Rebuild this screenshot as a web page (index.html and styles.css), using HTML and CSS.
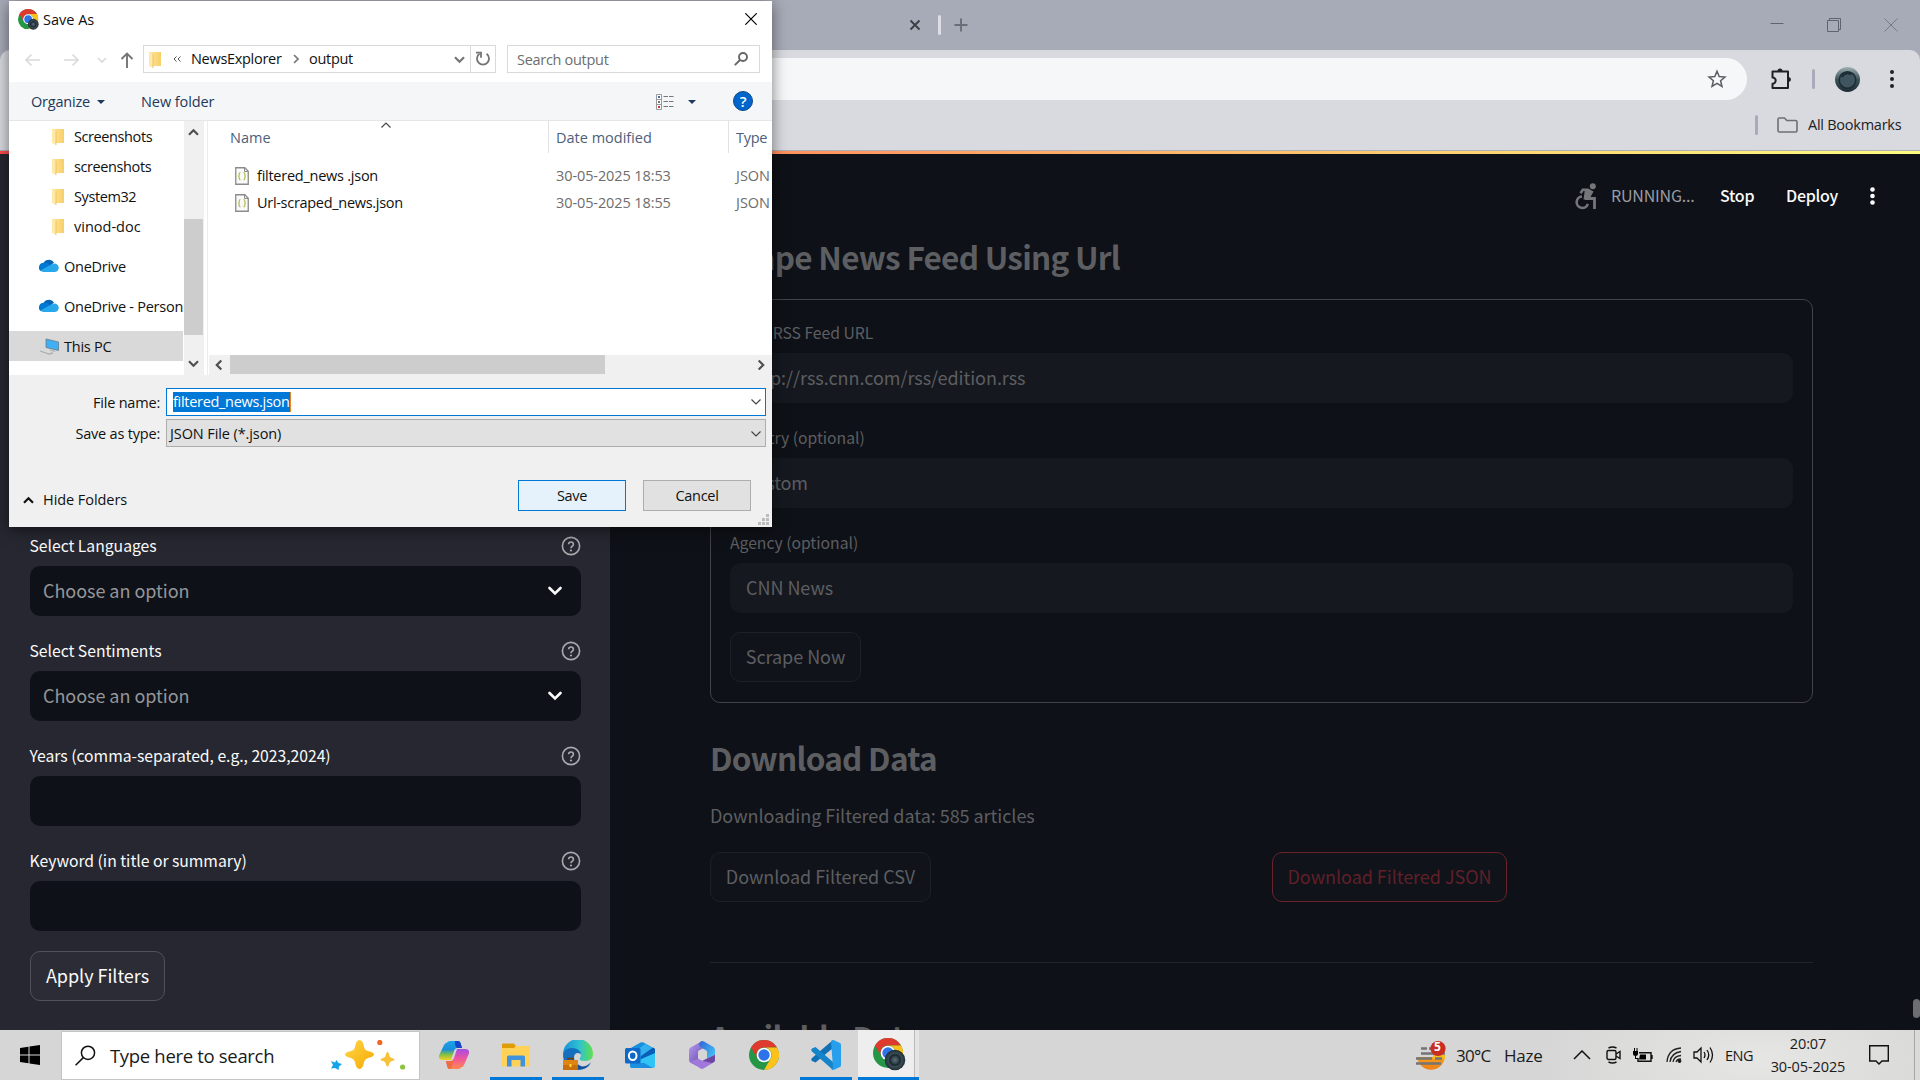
FILE: index.html
```html
<!DOCTYPE html>
<html lang="en">
<head>
<meta charset="utf-8">
<title>News Explorer</title>
<link rel="stylesheet" href="styles.css">
</head>
<body>
<svg class="defs" width="0" height="0" aria-hidden="true">
  <defs>
    <linearGradient id="fold" x1="0" x2="1"><stop offset="0" stop-color="#ffe59b"/><stop offset="1" stop-color="#f7cf68"/></linearGradient>
    <linearGradient id="cpA" x1="0" y1="0" x2="0" y2="1"><stop offset="0" stop-color="#1ba3f0"/><stop offset=".45" stop-color="#1a8fd8"/><stop offset=".7" stop-color="#7cc04a"/><stop offset="1" stop-color="#f5d020"/></linearGradient>
    <linearGradient id="cpB" x1="0" y1="0" x2="0" y2="1"><stop offset="0" stop-color="#a54be8"/><stop offset=".5" stop-color="#f0569b"/><stop offset="1" stop-color="#ff8a4c"/></linearGradient>
    <linearGradient id="edg" x1="0" x2="1"><stop offset="0" stop-color="#1b8fdc"/><stop offset=".55" stop-color="#2fc2cf"/><stop offset="1" stop-color="#62e04a"/></linearGradient>
    <linearGradient id="mA" x1="0" x2="1" y2="1"><stop offset="0" stop-color="#b9a0f5"/><stop offset="1" stop-color="#5b3a9e"/></linearGradient>
    <linearGradient id="mB" x1="0" x2="1" y2="1"><stop offset="0" stop-color="#2f62d8"/><stop offset="1" stop-color="#48d3f7"/></linearGradient>
    <linearGradient id="star" x1="0" x2="1" y2="1"><stop offset="0" stop-color="#ffd84a"/><stop offset="1" stop-color="#f5a800"/></linearGradient>
    <linearGradient id="sun" x1="0" x2="0" y2="1"><stop offset="0" stop-color="#f8c21c"/><stop offset="1" stop-color="#f07f1a"/></linearGradient>
    <radialGradient id="lens" cx=".5" cy=".5" r=".5"><stop offset="0" stop-color="#5d6d78"/><stop offset=".3" stop-color="#3a4a54"/><stop offset=".5" stop-color="#18242b"/><stop offset=".65" stop-color="#3b4c55"/><stop offset="1" stop-color="#1f2d34"/></radialGradient>
    <linearGradient id="sky" x1="0" x2="0" y2="1"><stop offset="0" stop-color="#9fb0b0"/><stop offset=".5" stop-color="#3f525b"/><stop offset="1" stop-color="#1d2c33"/></linearGradient>
    <symbol id="folder" viewBox="0 0 12 17"><path d="M0 1h12v14H4z" fill="url(#fold)"/><path d="M0 1l4 2v14l-4-2z" fill="#ffe9a8"/><path d="M4 3v14" stroke="#e6b84c" stroke-width=".7"/></symbol>
    <symbol id="cloud" viewBox="0 0 20 13"><path d="M4 7a6 6 0 0 1 11-3.500L10 8z" fill="#0364b8"/><path d="M4.500 3.800A4.700 4.700 0 0 0 1.500 12L13 6.500 9 4.200a5 5 0 0 0-4.500-.4z" fill="#0078d4"/><path d="M15 4.600A4.200 4.200 0 0 1 16 13H4.500A4.500 4.500 0 0 1 1.200 11.500L11.500 6z" fill="#28a8ea"/></symbol>
    <symbol id="json" viewBox="0 0 14 18"><path d="M.75.750H9.800L13.250 4.200V17.250H.75z" fill="#fafafa" stroke="#8b8b8b" stroke-width="1.300"/><path d="M9.500 1v3.500h3.500" fill="none" stroke="#8b8b8b"/><path d="M5.500 5.500q-1.300 0-1.300 1.300v1.200q0 1-.9 1.200.9.200.9 1.200v1.200q0 1.300 1.300 1.300M8.500 5.500q1.300 0 1.300 1.300v1.200q0 1 .9 1.200-.9.200-.9 1.200v1.200q0 1.300-1.300 1.300" fill="none" stroke="#b5bd4c" stroke-width="1.200"/></symbol>
    <symbol id="chrome" viewBox="0 0 30 30"><circle cx="15" cy="15" r="15" fill="#249646"/><path d="M2 7.500A15 15 0 0 1 28 7.500H15A7.500 7.500 0 0 0 8.500 18.750z" fill="#df3a30"/><path d="M28 7.500A15 15 0 0 1 15 30l6.500-11.250A7.500 7.500 0 0 0 15 7.500z" fill="#fcc21b"/><circle cx="15" cy="15" r="7.300" fill="#fff"/><circle cx="15" cy="15" r="5.700" fill="#2f73ea"/></symbol>
    <symbol id="help" viewBox="0 0 20 20"><circle cx="10" cy="10" r="8.600" fill="none" stroke="#a9aaad" stroke-width="1.600"/><path d="M7.600 8.300a2.400 2.300 0 1 1 3.600 2c-.8.500-1.200.9-1.200 1.900" fill="none" stroke="#a9aaad" stroke-width="1.600"/><circle cx="10" cy="14.500" r="1.100" fill="#a9aaad"/></symbol>
    <symbol id="drop" viewBox="0 0 14 10"><path d="M1.500 2l5.500 5.500L12.500 2" fill="none" stroke="#fafafa" stroke-width="2.600" stroke-linecap="round"/></symbol>
    <symbol id="thin" viewBox="0 0 10 6"><path d="M.5.500L5 5 9.500.500" fill="none" stroke="#444" stroke-width="1.200"/></symbol>
    <symbol id="thick" viewBox="0 0 11 8"><path d="M1 1.200l4.500 4.500L10 1.200" fill="none" stroke="currentColor" stroke-width="2.200"/></symbol>
  </defs>
</svg>

<div class="browser">
  <div class="tabstrip">
    <svg class="tab-close" width="12" height="12" viewBox="0 0 12 12"><path d="M1.500 1.500l9 9M10.500 1.500l-9 9" stroke="#3c3f45" stroke-width="1.900"/></svg>
    <i class="tab-sep"></i>
    <svg class="tab-new" width="14" height="14" viewBox="0 0 14 14"><path d="M7 .5v13M.5 7h13" stroke="#6b6e76" stroke-width="1.900"/></svg>
    <div class="win-buttons">
      <svg width="14" height="14" viewBox="0 0 14 14"><path d="M.5 5.500h13" stroke="#61646c"/></svg>
      <svg width="14" height="14" viewBox="0 0 14 14"><path d="M.5 2.500h11v11H.5zM2.500 2V.5h11v11H12" fill="none" stroke="#61646c"/></svg>
      <svg width="14" height="14" viewBox="0 0 14 14"><path d="M.5.500l13 13M13.500.500l-13 13" stroke="#777a82"/></svg>
    </div>
  </div>
  <div class="chrome-bars">
    <div class="addressbar">
      <div class="omnibox"><svg width="20" height="20" viewBox="0 0 20 20"><path d="M10 2.200l2.200 5.400 5.800.4-4.400 3.800 1.400 5.700L10 14.400l-5 3.100 1.400-5.700L2 8l5.800-.4z" fill="none" stroke="#5c5e62" stroke-width="1.500"/></svg></div>
      <svg class="ext" width="22" height="22" viewBox="0 0 22 22"><path d="M2.500 3.500h15.500v16.500H2.500v-4.200a3.200 3.200 0 0 0 0-6.400z" fill="none" stroke="#1f2023" stroke-width="2" stroke-linejoin="round"/><path d="M7.500 3a2.500 2.500 0 0 1 5 0zM18.500 9a2.500 2.500 0 0 1 0 5z" fill="#1f2023"/></svg>
      <i class="bar-sep"></i>
      <svg class="avatar" width="25" height="25" viewBox="0 0 25 25"><circle cx="12.500" cy="12.500" r="12.500" fill="url(#sky)"/><circle cx="12.500" cy="13" r="8.300" fill="#40555f" stroke="#1b2c34" stroke-width="1.500"/><path d="M7 10a6 6 0 0 1 9-2.500" stroke="#1a2b33" stroke-width="2" fill="none"/></svg>
      <svg class="menu" width="4" height="18" viewBox="0 0 4 18" fill="#1f2023"><circle cx="2" cy="2" r="2"/><circle cx="2" cy="9" r="2"/><circle cx="2" cy="16" r="2"/></svg>
    </div>
    <div class="bookmarks">
      <i class="bar-sep"></i>
      <svg width="21" height="16" viewBox="0 0 21 16"><path d="M1 2.500Q1 1 2.500 1H7.500l2.300 2.500h8.700Q20 3.500 20 5v8.500q0 1.500-1.500 1.500H2.500Q1 15 1 13.500z" fill="none" stroke="#6d6f73" stroke-width="1.600"/></svg>
      <span>All Bookmarks</span>
    </div>
  </div>
  <div class="decoration"></div>
  <div class="app">
    <aside class="sidebar">
      <div class="field"><div class="label"><span>Select Languages</span><svg width="20" height="20"><use href="#help"/></svg></div><div class="select"><span>Choose an option</span><svg width="14" height="10"><use href="#drop"/></svg></div></div>
      <div class="field"><div class="label"><span>Select Sentiments</span><svg width="20" height="20"><use href="#help"/></svg></div><div class="select"><span>Choose an option</span><svg width="14" height="10"><use href="#drop"/></svg></div></div>
      <div class="field"><div class="label"><span>Years (comma-separated, e.g., 2023,2024)</span><svg width="20" height="20"><use href="#help"/></svg></div><div class="select"></div></div>
      <div class="field"><div class="label"><span>Keyword (in title or summary)</span><svg width="20" height="20"><use href="#help"/></svg></div><div class="select"></div></div>
      <div class="btn apply">Apply Filters</div>
    </aside>
    <main class="main">
      <header class="app-header">
        <svg class="runner" width="22" height="27" viewBox="0 0 22 27" fill="none" stroke="#75767a"><circle cx="17.800" cy="3.200" r="3" fill="#75767a" stroke="none"/><path d="M5.500 10.200L7.800 6.800h5l4 2.200-4 7" stroke-width="2.600"/><path d="M10 6L17.500 8.500 13.500 16.500H8.500z" fill="#75767a" stroke="none"/><path d="M10 15.500h9.500V26" stroke-width="2.800"/><path d="M7 13.500a5.700 5.700 0 1 0 5.800 7.300" stroke-width="2.600"/></svg>
        <span class="running">RUNNING...</span>
        <b class="stop">Stop</b>
        <b class="deploy">Deploy</b>
        <svg class="kebab" width="5" height="18" viewBox="0 0 5 18" fill="#fafafa"><circle cx="2.500" cy="2.500" r="2.300"/><circle cx="2.500" cy="9" r="2.300"/><circle cx="2.500" cy="15.500" r="2.300"/></svg>
      </header>
      <div class="content">
        <h2>Scrape News Feed Using Url</h2>
        <form class="form">
          <div class="field"><div class="label">Enter RSS Feed URL</div><div class="input">http://rss.cnn.com/rss/edition.rss</div></div>
          <div class="field"><div class="label">Country (optional)</div><div class="input custom">Custom</div></div>
          <div class="field"><div class="label">Agency (optional)</div><div class="input">CNN News</div></div>
          <div class="btn faded scrape">Scrape Now</div>
        </form>
        <h2 class="download">Download Data</h2>
        <p>Downloading Filtered data: 585 articles</p>
        <div class="cols"><div><div class="btn faded csv">Download Filtered CSV</div></div><div><div class="btn faded danger">Download Filtered JSON</div></div></div>
        <hr>
        <h2 class="available">Available Data</h2>
      </div>
      <i class="page-thumb"></i>
    </main>
  </div>
</div>

<footer class="taskbar">
  <svg class="start" width="20" height="20" viewBox="0 0 20 20"><path d="M0 3l8.500-1.200V9.500H0zM9.500 1.600L20 0v9.500H9.500zM0 10.500h8.500v7.800L0 17zM9.500 10.500H20V20L9.500 18.400z"/></svg>
  <div class="search">
    <svg width="21" height="21" viewBox="0 0 21 21" fill="none" stroke="#111" stroke-width="1.500"><circle cx="13" cy="7.800" r="6.600"/><path d="M8.300 12.600L.6 20.300"/></svg>
    <span>Type here to search</span>
    <svg class="sparkles" width="76" height="30" viewBox="0 0 76 30"><path d="M29.500 0Q33 0 34 7q.8 3.500 4 4 6 1.200 6 3.500t-6 3.500q-3.200.8-4 4-1 7-4.500 7t-4.500-7q-.8-3.200-4-4-6-1.200-6-3.500t6-3.500q3.200-.5 4-4 1-7 4.500-7z" fill="url(#star)"/><path d="M57.500 12q1.200 0 2 4 .6 1.500 2.500 2 2.500.5 2.500 1.500T62 21q-1.900.5-2.500 2-.8 3.500-2 3.500T55.500 23Q55 21.500 53 21q-2.500-.5-2.500-1.500T53 18q2-.5 2.500-2 .8-4 2-4z" fill="#f8c136"/><path d="M6.500 20l2 3 3.500 1-3 2.500-.5 3.500-3.500-2-4 .5 2-3.500L1 21l4 1.500z" fill="#12a5ec"/><circle cx="49.800" cy="2.500" r="2.600" fill="#f36523"/><circle cx="72.600" cy="27" r="2.600" fill="#8bc63e"/></svg>
  </div>
  <div class="apps">
    <div class="task copilot"><svg width="30" height="28" viewBox="0 0 30 28"><path d="M8 1.500Q9 0 11 0h8q2 0 2.600 2l1.400 5h-5q-2 0-2.800 2.500L12 19H4q-5 0-4-4.500L5 4q1-2 3-2.500z" fill="url(#cpA)"/><path d="M16 0h3q2 0 2.600 2L23 7h-5q-2.500-2-2-7z" fill="#1846c8"/><path d="M22 26.500Q21 28 19 28h-8q-2 0-2.600-2L7 20h5q2 0 2.800-2.500L18 8h8q5 0 4 4.500L25 24q-1 2-3 2.500z" fill="url(#cpB)"/><path d="M8.400 26L7 20h5q2 0 2.800-2l-2 8q-.7 2-2.500 2-1.500 0-1.900-2z" fill="#ee6c3e"/></svg></div>
    <div class="task open"><svg width="28" height="24" viewBox="0 0 28 24"><path d="M0 1.500Q0 .5 1 .5h11l2 3v4H0z" fill="#df9c06"/><path d="M0 5h12l2-2h13q1 0 1 1v18.500q0 1-1 1H1q-1 0-1-1z" fill="#ffd257"/><path d="M5 23.500V14q0-1.500 1.500-1.500h15Q23 12.500 23 14v9.500h-4.500V17h-9v6.500z" fill="#3f92dd"/></svg></div>
    <div class="task open"><svg width="30" height="30" viewBox="0 0 30 30"><path d="M0 14A15 15 0 0 1 30 14q0 7-7.500 7-6 0-6-2.500 2-1.500 1-5-2-4.500-8-4.500T0 14z" fill="url(#edg)"/><path d="M0 14q2-6 9-6 8 0 9 6.500-1-1.500-3-1.500-4 0-4 5 0 7 7.500 9.500 5 0 9.500-4.500Q24 30 15 30 0 29 0 14z" fill="#1470bd"/><path d="M11 17q1 7 8 9.500 5 0 9-4.500Q24 29.500 15 29.500z" fill="#11529b"/><path d="M0 20h15v10H0z" fill="#c86f0b"/><path d="M0 20h15v5H0z" fill="#de8411"/><path d="M5 20v-1.500h5V20" fill="none" stroke="#6b3d06" stroke-width="1.300"/><path d="M6.500 24h2v3h-2z" fill="#ffd83d"/></svg></div>
    <div class="task"><svg width="30" height="26" viewBox="0 0 30 26"><path d="M4 7L15.500.500Q17 0 18.500.500L30 7v5L17 20 4 12z" fill="#1490df"/><path d="M12 8L20 2l8 4.500L16 16z" fill="#32b0ef"/><path d="M16 14L28 5.500 30 7v5L16 22z" fill="#0a5eb8"/><path d="M30 11v13q0 2-2 2H7q-2 0-2-2v-2z" fill="#2fc4f5"/><path d="M5 21h14l9 5H7q-2 0-2-2z" fill="#1b8fe0"/><rect y="6" width="15.500" height="15.500" rx="1.500" fill="#0f69c9"/><ellipse cx="7.700" cy="13.700" rx="3.800" ry="4.300" fill="none" stroke="#fff" stroke-width="2"/></svg></div>
    <div class="task"><svg width="26" height="28" viewBox="0 0 26 28"><path d="M13 0L1.500 6.500Q0 7.500 0 9v10q0 2 2 3l5 2.500q2 0 2-2V11q0-1 1-1.500L18 5z" fill="url(#mA)"/><path d="M12 .5q1.500-1 3 0L24.500 6Q26 7 26 9v11l-8-2.500V11q0-1-1-1.700L12 6.500Q10 5 10 3q0-1.500 2-2.500z" fill="url(#mB)"/><path d="M1.500 21L9 17.500l3.500 2q1 .5 2 0L18 17.500l8-4V19q0 1.500-1.500 2.500l-10 6q-1.500.8-3 0z" fill="#a277dc"/><path d="M12 19.500q1 .5 2 0L26 14v5q0 2-3 3z" fill="#6c479f"/><path d="M9.500 11.500L13 9.500l3.500 2v5l-3.500 2-3.500-2z" fill="#d6d6d6"/></svg></div>
    <div class="task"><svg width="30" height="30"><use href="#chrome"/></svg></div>
    <div class="task open"><svg width="30" height="30" viewBox="0 0 30 30"><path d="M22 0v8L4.500 22.500 1 21q-1.500-1.500 0-3z" fill="#0f72b7"/><path d="M22 30v-8L4.500 7 1 8.500q-1.500 1.500 0 3z" fill="#1484cb"/><path d="M20 1Q21 0 22.500 0L29 3q1 .5 1 2v20q0 1.500-1 2l-6.500 3q-1.500 0-2.500-1l2-1z" fill="#279fec"/></svg></div>
    <div class="task active"><svg width="33" height="33" viewBox="0 0 33 33"><use href="#chrome" width="30" height="30"/><circle cx="22" cy="22" r="10.300" fill="url(#lens)"/></svg></div>
  </div>
  <div class="tray">
    <svg class="weather" width="31" height="31" viewBox="0 0 31 31"><circle cx="15" cy="16" r="13.800" fill="url(#sun)"/><path d="M0 0h31v17H0z" fill="#d6d6d6"/><path d="M17 15h12v4H17z" fill="#f7bb1c"/><path d="M5 8.500h6M13 8.500h5M5 13.500h24M0 18.500h16M19 18.500h7M0 23.500h25" stroke="#747474" stroke-width="2.400"/><circle cx="22" cy="8.500" r="7.600" fill="#cb2c20"/></svg>
    <b class="badge">5</b>
    <span class="temp">30°C</span><span class="haze">Haze</span>
    <svg class="caret" width="18" height="10" viewBox="0 0 18 10"><path d="M1 9l8-8 8 8" fill="none" stroke="#111" stroke-width="1.500"/></svg>
    <svg class="cam" width="16" height="18" viewBox="0 0 16 18" fill="none" stroke="#111" stroke-width="1.400"><rect x="1" y="4.500" width="9" height="9" rx="1.500"/><path d="M10 8l4-2.500v7L10 10M2.500 2q4-2 8 0M2.500 16q4 2 8 0"/></svg>
    <svg class="bat" width="20" height="15" viewBox="0 0 20 15"><path d="M6 4.700h12v8.600H5V10M19 7v4" fill="none" stroke="#111" stroke-width="1.400"/><path d="M7 6.500h6v5H6z"/><path d="M0 3h5v3q0 2-2.500 2T0 6zM1 0h1v3H1zM3.500 0h1v3h-1zM2 8h1v2h2v1H2z"/></svg>
    <svg class="wifi" width="16" height="16" viewBox="0 0 16 16" fill="none" stroke="#222" stroke-width="1.300"><path d="M1 15Q2 2 15 1M4 15Q5 6 15 4.500M7 15q1-6 8-6.500M10 15q1-3 5-3"/><circle cx="13.500" cy="14" r="1.300" fill="#111"/></svg>
    <svg class="vol" width="21" height="18" viewBox="0 0 21 18" fill="none" stroke="#111" stroke-width="1.300"><path d="M1 6h3l4-4v14l-4-4H1zM11 6q2 3 0 6M14 4q3.500 5 0 10M17 1.500q5 7.500 0 15"/></svg>
    <span class="eng">ENG</span>
    <div class="clock"><span>20:07</span><span>30-05-2025</span></div>
    <svg class="note" width="20" height="20" viewBox="0 0 20 20"><path d="M.7.700h18.600v15.300H13L10 19l-3-3H.7z" fill="none" stroke="#111" stroke-width="1.400"/></svg>
    <i class="peek"></i>
  </div>
</footer>

<section class="dialog">
  <div class="dlg-title">
    <svg width="21" height="21" viewBox="0 0 33 33"><use href="#chrome" width="32" height="32"/><circle cx="24" cy="24" r="8.500" fill="url(#lens)"/></svg>
    <span>Save As</span>
    <svg class="dlg-close" width="12" height="12" viewBox="0 0 12 12"><path d="M.3.300l11.400 11.400M11.700.3L.3 11.700" stroke="#000" stroke-width="1.200"/></svg>
  </div>
  <div class="dlg-nav">
    <svg class="arrows" width="110" height="16" viewBox="0 0 110 16" fill="none" stroke="#dadada" stroke-width="1.700"><path d="M15 8H1M6.500 2.500L1 8l5.500 5.500M39 8h14M47.500 2.500L53 8l-5.500 5.500M73 6l4 4 4-4"/><path d="M102 16V1.500M96.500 7L102 1.500 107.500 7" stroke="#747474" stroke-width="1.900"/></svg>
    <div class="path">
      <svg width="12" height="17"><use href="#folder"/></svg>
      <svg class="laquo" width="8" height="6" viewBox="0 0 8 6"><path d="M3.500.5L1 3l2.500 2.500M7.500.5L5 3l2.500 2.500" fill="none" stroke="#555"/></svg>
      <span class="p1">NewsExplorer</span>
      <svg class="rsaquo" width="6" height="10" viewBox="0 0 6 10"><path d="M1 1l4 4-4 4" fill="none" stroke="#777" stroke-width="1.700"/></svg>
      <span class="p2">output</span>
      <svg class="pdrop" width="11" height="8"><use href="#thick"/></svg>
      <div class="refresh"><svg width="16" height="16" viewBox="0 0 16 16" fill="none" stroke="#747474" stroke-width="1.800"><path d="M4.500 2.800A6 6 0 1 0 11.500 2.800"/><path d="M1 1.700h5v5" /></svg></div>
    </div>
    <div class="find"><span>Search output</span><svg width="14" height="14" viewBox="0 0 14 14" fill="none" stroke="#666" stroke-width="1.900"><circle cx="9" cy="5" r="4"/><path d="M6 8L.8 13.200"/></svg></div>
  </div>
  <div class="dlg-tools">
    <span class="organize">Organize</span><i class="tri"></i><span class="newf">New folder</span>
    <svg class="views" width="19" height="16" viewBox="0 0 19 16"><path d="M.5.500h5v15h-5zM.5 5.500h5M.5 10.500h5" fill="#fff" stroke="#999"/><path d="M2 2h2v2H2z" fill="#3c6eb4"/><path d="M2 7h2v2H2z" fill="#777"/><path d="M2 12h2v2H2z" fill="#c33"/><path d="M7.500 2.500h11M7.500 7.500h11M7.500 12.500h11" stroke="#777" stroke-dasharray="4.500 1"/></svg>
    <i class="tri"></i><b class="q">?</b>
  </div>
  <div class="dlg-body">
    <div class="tree">
      <div class="node sub"><svg width="12" height="17"><use href="#folder"/></svg><span>Screenshots</span></div>
      <div class="node sub"><svg width="12" height="17"><use href="#folder"/></svg><span>screenshots</span></div>
      <div class="node sub"><svg width="12" height="17"><use href="#folder"/></svg><span>System32</span></div>
      <div class="node sub"><svg width="12" height="17"><use href="#folder"/></svg><span class="vinod">vinod-doc</span></div>
      <div class="node top"><svg width="20" height="13"><use href="#cloud"/></svg><span>OneDrive</span></div>
      <div class="node top"><svg width="20" height="13"><use href="#cloud"/></svg><span>OneDrive - Person</span></div>
      <div class="node top sel"><svg width="20" height="18" viewBox="0 0 20 18"><path d="M7 1l12.500 3v8.500L7 9.500z" fill="#3fb0f5" stroke="#6a7a86" stroke-width=".8"/><path d="M11 12l5 1.500M1 13l9 3 4-1" stroke="#a9b0b5" fill="none" stroke-width="1.300"/></svg><span>This PC</span></div>
    </div>
    <div class="vbar"><svg class="up" width="11" height="8"><use href="#thick"/></svg><i></i><svg width="11" height="8"><use href="#thick"/></svg></div>
    <div class="list">
      <div class="lrow head"><span class="c-name">Name</span><svg class="sort" width="10" height="6"><use href="#thin"/></svg><span class="c-date">Date modified</span><span class="c-type">Type</span></div>
      <div class="lrow f1"><svg width="14" height="18"><use href="#json"/></svg><span class="c-file">filtered_news .json</span><span class="c-date">30-05-2025 18:53</span><span class="c-type">JSON</span></div>
      <div class="lrow"><svg width="14" height="18"><use href="#json"/></svg><span class="c-file">Url-scraped_news.json</span><span class="c-date">30-05-2025 18:55</span><span class="c-type">JSON</span></div>
      <div class="hbar"><svg class="left" width="11" height="8"><use href="#thick"/></svg><i></i><svg class="right" width="11" height="8"><use href="#thick"/></svg></div>
    </div>
  </div>
  <div class="dlg-form">
    <span class="flabel">File name:</span><div class="combo focus"><mark>filtered_news.json</mark><svg width="10" height="6"><use href="#thin"/></svg></div>
    <span class="flabel">Save as type:</span><div class="combo"><span>JSON File (*.json)</span><svg width="10" height="6"><use href="#thin"/></svg></div>
  </div>
  <div class="dlg-actions">
    <svg class="up" width="11" height="8"><use href="#thick"/></svg><span class="hide">Hide Folders</span>
    <div class="wbtn primary">Save</div><div class="wbtn">Cancel</div>
  </div>
  <svg class="grip" width="11" height="11" viewBox="0 0 11 11" fill="#bcbcbc"><path d="M8 0h3v3H8zM8 4h3v3H8zM8 8h3v3H8zM4 4h3v3H4zM4 8h3v3H4zM0 8h3v3H0z"/></svg>
</section>
</body>
</html>
```
FILE: styles.css
```css
* { box-sizing: border-box; }
body { margin: 0; width: 1920px; height: 1080px; overflow: hidden; position: relative; display: grid; grid-template-rows: 1030px 50px; background: #0e1117; font-family: "Open Sans", "Noto Sans", sans-serif; white-space: nowrap; }
svg, i { display: block; flex: none; }
.defs { position: absolute; }

/* browser frame */
.browser { display: grid; grid-template-rows: 50px 101px 3px 876px; overflow: hidden; background: #a7abb7; }
.tabstrip { display: flex; align-items: center; padding-left: 909px; height: 50px; }
.tab-sep { width: 3px; height: 20px; margin-left: 17px; background: #dcdee4; border-radius: 2px; }
.tab-new { margin-left: 13px; }
.win-buttons { margin-left: auto; display: flex; gap: 43px; padding-right: 22px; }
.chrome-bars { background: #d9dadf; border-radius: 10px 10px 0 0; border-bottom: 1px solid #aeb1b8; }
.addressbar { display: flex; align-items: center; height: 58px; }
.omnibox { width: 1687px; height: 42px; margin-left: 60px; background: #f6f7f9; border-radius: 21px; display: flex; justify-content: flex-end; align-items: center; padding-right: 20px; }
.ext { margin-left: 23px; }
.bar-sep { width: 3px; height: 20px; background: #a7abb9; border-radius: 2px; }
.ext + .bar-sep { margin-left: 20px; }
.avatar { margin-left: 20px; }
.menu { margin-left: 30px; }
.bookmarks { display: flex; align-items: center; height: 34px; padding-left: 1755px; font-size: 14.500px; letter-spacing: -0.250px; color: #202124; }
.bookmarks svg { margin: 0 10px 0 19px; }
.bookmarks span { margin-top: -2px; }
.decoration { background: linear-gradient(90deg, #ff4b4b, #ffa264 50%, #fffd80); }

/* app */
.app { display: grid; grid-template-columns: 610px 1310px; font-family: "Noto Sans CJK SC", sans-serif; color: #fafafa; }
.sidebar { background: #262730; padding: 376px 29px 0 30px; }
.field { height: 105px; }
.label { height: 36px; display: flex; justify-content: space-between; align-items: center; font-size: 15.750px; line-height: 20px; letter-spacing: -0.040px; padding-bottom: 4px; }
.sidebar .label span { margin-left: -0.500px; }
.select { height: 50px; border-radius: 10px; background: #0e1117; display: flex; align-items: center; justify-content: space-between; padding: 0 19px 0 13px; font-size: 18px; line-height: 24px; letter-spacing: -0.040px; color: #95969a; }
.select span { margin-top: -2px; }
.btn { height: 50px; width: max-content; border: 1px solid #505159; border-radius: 10px; display: flex; align-items: center; justify-content: center; font-size: 18px; line-height: 24px; letter-spacing: -0.040px; padding-bottom: 2px; background: #2b2c36; }
.apply { width: 135px; margin-top: 1px; }
.main { position: relative; background: #0e1117; overflow: hidden; }
.app-header { height: 84px; display: flex; align-items: center; padding-left: 965px; font-size: 16px; line-height: 20px; }
.running { width: 84px; margin: -2px 0 0 14px; letter-spacing: -0.200px; color: #9a9ca3; }
.stop, .deploy { font-weight: 500; letter-spacing: -0.250px; }
.stop { width: 36px; margin: -3px 0 0 25px; }
.deploy { width: 52px; margin: -2px 0 0 30px; }
.kebab { margin-left: 32px; }
.content { width: 1103px; margin-left: 100px; color: #5d5e61; }
h2 { margin: 0; font-size: 31.500px; line-height: 40px; font-weight: 700; letter-spacing: -0.720px; position: relative; top: -2px; }
.form { margin: 21px 0 0; height: 404px; border: 1px solid #424347; border-radius: 10px; padding: 17px 19px; }
.input { height: 50px; border-radius: 10px; background: #15181f; display: flex; align-items: center; padding: 0 16px 2px; font-size: 18px; line-height: 24px; letter-spacing: -0.040px; }
.custom { padding-left: 15px; letter-spacing: -0.300px; }
.faded { background: #10131a; border-color: #1e2027; }
.scrape { width: 131px; }
.download { margin-top: 36px; }
p { margin: 23px 0 0; font-size: 18px; line-height: 26px; letter-spacing: -0.040px; }
.cols { margin-top: 24px; display: grid; grid-template-columns: 562px 1fr; }
.csv { width: 221px; }
.danger { width: 235px; color: #5f2028; border-color: #6b232b; }
hr { margin: 60px 0 0; border: 0; height: 1px; background: #222428; }
.available { margin-top: 55px; }
.page-thumb { position: absolute; right: 0; top: 845px; width: 7px; height: 19px; border-radius: 4px; background: #6d6e71; }

/* taskbar */
.taskbar { display: flex; background: #d6d6d6; color: #1a1a1a; }
.start { margin: 15px 0 0 20px; }
.search { width: 359px; height: 49px; margin: 1px 0 0 21px; background: #fff; border: 1px solid #c4c4c4; display: flex; align-items: center; padding: 0 0 1px 13px; font-size: 18.500px; letter-spacing: -0.320px; }
.search > span { width: 164px; margin-left: 14px; }
.sparkles { margin-left: 56px; }
.apps { display: flex; margin-left: 8px; }
.task { width: 52px; margin-right: 10px; display: flex; align-items: center; justify-content: center; border-bottom: 3px solid transparent; padding-top: 2px; }
.open { border-color: #0078d7; }
.active { width: 61px; margin: 0 0 0 -4px; padding-left: 1px; background: linear-gradient(90deg, #eee 56px, #b9b9b9 56px, #b9b9b9 57px, #e4e4e4 57px) padding-box; border-color: #0078d7; }
.tray { flex: 1; display: flex; align-items: center; position: relative; padding-left: 497px; background: radial-gradient(ellipse 220px 90px at 840px 30px, #e6e6e4, transparent); font-size: 17px; }
.badge { position: absolute; left: 515px; top: 8px; width: 8px; font-size: 12px; line-height: 18px; color: #fff; }
.temp { width: 38px; margin: 0 0 0 9px; letter-spacing: -0.700px; }
.haze { width: 40px; margin: 0 0 0 10px; letter-spacing: -0.200px; }
.caret { margin-left: 29px; }
.cam { margin-left: 15px; }
.bat { margin-left: 11px; }
.wifi { margin-left: 13px; }
.vol { margin-left: 11px; }
.eng { width: 30px; margin: 0 0 0 11px; font-size: 14.500px; letter-spacing: -0.500px; }
.clock { width: 78px; margin-left: 14px; display: flex; flex-direction: column; align-items: center; font-size: 14.500px; line-height: 23px; letter-spacing: -0.100px; }
.note { margin-left: 22px; }
.peek { width: 1px; height: 50px; margin-left: 25px; background: #a8a8a8; }

/* save dialog */
.dialog { position: absolute; left: 9px; top: 1px; width: 763px; height: 526px; background: #f0f0f0; box-shadow: 0 3px 14px rgba(0,0,0,.5); font-size: 14.500px; line-height: 20px; letter-spacing: -0.300px; color: #111; }
.dlg-title { height: 44px; background: #fff; display: flex; align-items: flex-start; padding: 8px 15px 0 9px; }
.dlg-title span { margin: 1px 0 0 4px; letter-spacing: 0; }
.dlg-close { margin: 4px 0 0 auto; }
.dlg-nav { height: 37px; background: #fff; display: flex; }
.arrows { margin: 7px 0 0 16px; }
.path { width: 353px; height: 28px; margin-left: 8px; border: 1px solid #d9d9d9; display: flex; align-items: center; padding-left: 5px; }
.laquo { margin-left: 12px; }
.p1 { width: 92px; margin-left: 10px; }
.rsaquo { margin-left: 10px; }
.p2 { width: 46px; margin-left: 10px; }
.pdrop { margin: 2px 0 0 auto; color: #747474; }
.refresh { width: 25px; height: 26px; margin-left: 5px; border-left: 1px solid #d9d9d9; display: flex; align-items: center; justify-content: center; }
.find { width: 253px; height: 28px; margin-left: 11px; border: 1px solid #d9d9d9; display: flex; align-items: center; justify-content: space-between; padding: 0 11px 0 9px; color: #6d6d6d; }
.find span { padding-top: 1px; }
.dlg-tools { height: 39px; background: #f5f6f7; border-bottom: 1px solid #e4e6e8; display: flex; align-items: center; padding: 1px 0 0 22px; color: #1e395b; }
.organize { width: 61px; letter-spacing: -0.200px; }
.tri { width: 0; height: 0; border: 4px solid transparent; border-top-color: #1e395b; border-bottom: 0; margin-left: 5px; }
.newf { width: 76px; margin-left: 36px; letter-spacing: -0.080px; }
.views { margin-left: 439px; }
.views + .tri { margin-left: 13px; }
.q { width: 20px; height: 20px; margin: -2px 0 0 37px; border-radius: 50%; background: #0066cc; border: 1px solid #0c4a86; color: #fff; line-height: 18px; text-align: center; font-size: 15px; font-weight: 600; }
.dlg-body { height: 254px; display: flex; background: #fff; }
.tree { width: 175px; overflow: hidden; }
.node { height: 30px; display: flex; align-items: center; width: 174px; overflow: hidden; }
.sub { padding: 1px 0 0 43px; letter-spacing: -0.400px; }
.sub span { margin-left: 10px; }
.vinod { letter-spacing: 0; }
.top { margin-top: 10px; padding-left: 30px; letter-spacing: -0.250px; }
.top span { margin: 1px 0 0 5px; }
.top svg { margin-top: -1px; }
.sel { background: #d9d9d9; }
.sel svg { margin-top: 2px; }
.vbar { width: 20px; background: #f0f0f0; display: flex; flex-direction: column; align-items: center; padding: 7px 1px 6px 0; color: #505050; }
.vbar i { width: 19px; height: 116px; margin: 83px 0 25px; background: #cdcdcd; }
.up, .sort { transform: rotate(180deg); }
.list { width: 565px; margin-left: 3px; border-left: 1px solid #ededed; overflow: hidden; }
.lrow { height: 27px; display: flex; align-items: center; padding-left: 27px; }
.head { height: 32px; padding-left: 22px; color: #4c607a; padding-top: 2px; }
.f1 { margin-top: 9px; }
.c-file { width: 299px; margin-left: 8px; }
.f1 .c-file { letter-spacing: -0.250px; }
.c-name { width: 151px; letter-spacing: 0; }
.sort { align-self: flex-start; margin-top: -1px; }
.head .c-date { margin-left: 157px; width: 180px; height: 32px; margin-top: -2px; line-height: 34px; border-left: 1px solid #e2e2e2; padding-left: 7px; letter-spacing: 0; }
.head .c-type { height: 32px; margin-top: -2px; line-height: 34px; border-left: 1px solid #e2e2e2; padding-left: 7px; }
.lrow:not(.head) .c-date { width: 180px; color: #6d6d6d; letter-spacing: -0.100px; }
.lrow:not(.head) .c-type { color: #6d6d6d; letter-spacing: 0; }
.hbar { height: 20px; margin: 139px 0 0 1px; background: #f0f0f0; display: flex; align-items: flex-start; color: #505050; padding-left: 4px; }
.hbar i { width: 375px; height: 19px; background: #cdcdcd; margin: 0 151px 0 6px; }
.left { transform: rotate(90deg); margin-top: 6px; }
.right { transform: rotate(-90deg); margin-top: 6px; }
.dlg-form { height: 105px; display: grid; grid-template-columns: 151px 600px; grid-template-rows: 28px 28px; row-gap: 3px; column-gap: 6px; padding-top: 13px; align-items: center; }
.flabel { text-align: right; padding-top: 1px; letter-spacing: -0.200px; }
.combo { height: 28px; border: 1px solid #adadad; background: #e1e1e1; display: flex; align-items: center; justify-content: space-between; padding: 1px 4px 0 3px; letter-spacing: -0.100px; }
.focus { border-color: #0078d7; background: #fff; padding: 0 4px 0 6px; letter-spacing: -0.300px; }
mark { background: #0078d7; color: #fff; height: 20px; width: 118px; border-right: 1px solid #e8862a; }
.dlg-actions { display: flex; padding-left: 14px; height: 31px; }
.dlg-actions > svg { margin-top: 16px; }
.hide { width: 475px; margin: 10px 0 0 9px; letter-spacing: -0.060px; }
.wbtn { width: 108px; height: 31px; margin-right: 17px; border: 1px solid #adadad; background: #e1e1e1; text-align: center; line-height: 29px; }
.primary { border-color: #0078d7; background: #e5f1fb; }
.grip { position: absolute; right: 3px; bottom: 2px; }
```
